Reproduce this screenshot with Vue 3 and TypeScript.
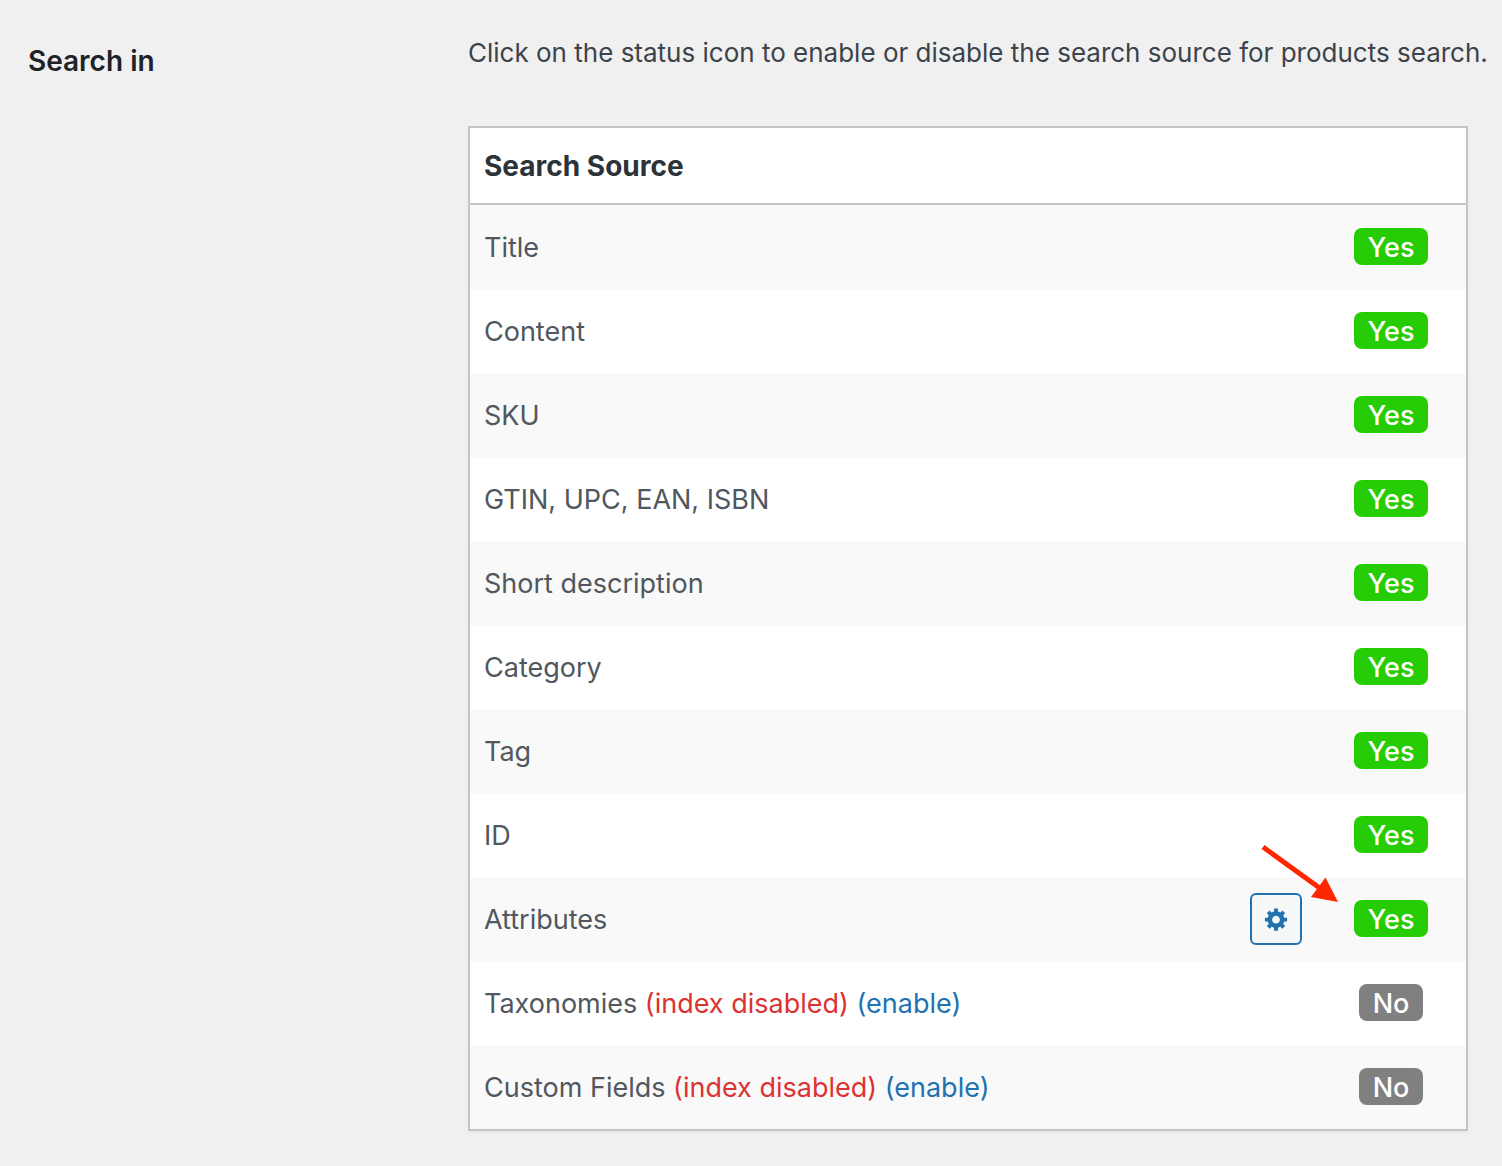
<script setup lang="ts">
import { ref } from 'vue'

interface SearchSource {
  id: string
  name: string
  enabled: boolean
  configurable?: boolean
  indexDisabled?: boolean
}

const sources = ref<SearchSource[]>([
  { id: 'title', name: 'Title', enabled: true },
  { id: 'content', name: 'Content', enabled: true },
  { id: 'sku', name: 'SKU', enabled: true },
  { id: 'gtin', name: 'GTIN, UPC, EAN, ISBN', enabled: true },
  { id: 'excerpt', name: 'Short description', enabled: true },
  { id: 'category', name: 'Category', enabled: true },
  { id: 'tag', name: 'Tag', enabled: true },
  { id: 'id', name: 'ID', enabled: true },
  { id: 'attributes', name: 'Attributes', enabled: true, configurable: true },
  { id: 'taxonomies', name: 'Taxonomies', enabled: false, indexDisabled: true },
  { id: 'fields', name: 'Custom Fields', enabled: false, indexDisabled: true },
])

function toggle(source: SearchSource): void {
  source.enabled = !source.enabled
}
</script>

<template>
  <main class="settings">
    <h2 class="settings-label">Search in</h2>
    <section class="settings-field">
      <p class="description">
        Click on the status icon to enable or disable the search source for products search.
      </p>
      <table class="sources">
        <thead>
          <tr>
            <th scope="col" colspan="3">Search Source</th>
          </tr>
        </thead>
        <tbody>
          <tr v-for="source in sources" :key="source.id">
            <td class="name">
              {{ source.name }}
              <template v-if="source.indexDisabled">
                <span class="warning">(index disabled)</span>
                {{ ' ' }}
                <a href="#enable">(enable)</a>
              </template>
            </td>
            <td class="options">
              <div v-if="source.configurable" class="options-box">
                <button type="button" class="gear" aria-label="Configure">
                  <svg viewBox="-0.5 0 20 20" width="26" height="26" aria-hidden="true">
                    <path
                      fill="currentColor"
                      d="M18 12h-2.18c-.17.7-.44 1.35-.81 1.93l1.54 1.54-2.1 2.1-1.54-1.54c-.58.36-1.23.63-1.91.79V19H8v-2.18c-.68-.16-1.33-.43-1.91-.79l-1.54 1.54-2.12-2.12 1.54-1.54c-.36-.58-.63-1.23-.79-1.91H1V9.03h2.17c.16-.7.44-1.35.8-1.94L2.43 5.55l2.1-2.1 1.54 1.54c.58-.37 1.24-.64 1.93-.81V2h3v2.18c.68.16 1.33.43 1.91.79l1.54-1.54 2.12 2.12-1.54 1.54c.36.59.64 1.24.8 1.94H18V12zm-8.5 1.5c1.66 0 3-1.34 3-3s-1.34-3-3-3-3 1.34-3 3 1.34 3 3 3z"
                    />
                  </svg>
                </button>
                <svg class="arrow" viewBox="0 0 80 60" width="80" height="60" aria-hidden="true">
                  <path d="M3 4 61 46" stroke="#ff2600" stroke-width="5" fill="none" />
                  <path d="M65.5 34.500 78 59 51 54z" fill="#ff2600" />
                </svg>
              </div>
            </td>
            <td class="status">
              <button
                type="button"
                class="badge"
                :class="{ on: source.enabled }"
                :aria-pressed="source.enabled"
                @click="toggle(source)"
              >
                {{ source.enabled ? 'Yes' : 'No' }}
              </button>
            </td>
          </tr>
        </tbody>
      </table>
    </section>
  </main>
</template>

<style>
body {
  margin: 0;
  background: #f0f0f0;
}
</style>

<style scoped>
.settings {
  display: grid;
  grid-template-columns: 440px minmax(0, 1fr);
  padding: 32px 14px 35px 28px;
  font-family: Inter, "Liberation Sans", sans-serif;
  font-size: 27px;
  line-height: 36px;
  color: #50575e;
}

.settings-label {
  margin: 11px 0 0;
  font-size: 28px;
  font-weight: 600;
  color: #1d2327;
}

.description {
  margin: 0 0 52px;
  font-size: 26px;
  line-height: 42px;
  color: #3c434a;
}

.sources {
  width: calc(100% - 20px);
  border: 2px solid #c3c4c7;
  border-spacing: 0;
  background: #fff;
  box-shadow: 0 2px 2px rgba(0, 0, 0, 0.04);
}

th {
  height: 75px;
  padding: 0 14px;
  border-bottom: 2px solid #c3c4c7;
  font-size: 28px;
  font-weight: 700;
  text-align: left;
  color: #2c3338;
}

td {
  box-sizing: border-box;
  height: 84px;
  padding: 0;
}

tbody tr:nth-child(odd) {
  background: #f9f9f9;
}

.name {
  padding: 2px 0 0 14px;
}

.warning {
  color: #dc3232;
}

a {
  color: #2271b1;
  text-decoration: none;
}

.options {
  width: 80px;
}

.options-box {
  position: relative;
  width: 52px;
  margin-left: 14px;
}

.gear {
  display: flex;
  align-items: center;
  justify-content: center;
  width: 52px;
  height: 52px;
  padding: 0;
  border: 2px solid #2271b1;
  border-radius: 6px;
  background: #f6f7f7;
  color: #2271b1;
  cursor: pointer;
}

.arrow {
  position: absolute;
  top: -50px;
  left: 10px;
  pointer-events: none;
}

.status {
  width: 150px;
  padding-bottom: 2px;
  text-align: center;
}

.badge {
  display: inline-block;
  padding: 2px 14px 0;
  border: 0;
  border-radius: 8px;
  background: #808080;
  color: #fff;
  font: inherit;
  font-weight: 500;
  line-height: 35px;
  vertical-align: middle;
  cursor: pointer;
}

.badge.on {
  background: #26cc05;
}
</style>
